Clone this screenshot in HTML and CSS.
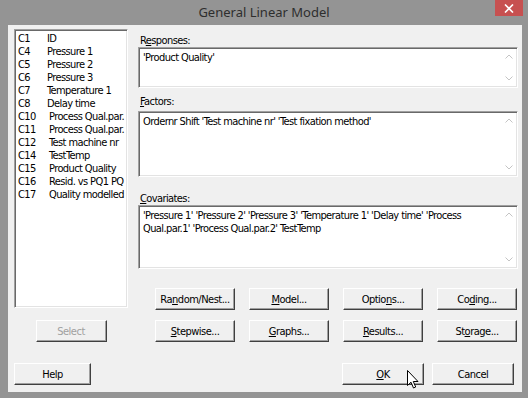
FILE: index.html
```html
<!DOCTYPE html>
<html lang="en">
<head>
    <meta charset="UTF-8">
    <title>General Linear Model</title>
    <link rel="stylesheet" href="styles.css">
</head>
<body>
<div class="window">
    <div class="titlebar">
        <span></span>
        <span class="title">General Linear Model</span>
        <span class="close">
            <svg width="10" height="9" viewBox="0 0 10 9"><path d="M1 0.5 L9 8.5 M9 0.5 L1 8.5" stroke="#fff" stroke-width="1.6"/></svg>
        </span>
    </div>
    <div class="client">
        <div class="main">
            <div class="left">
                <div class="listbox">
                    <div class="row"><span class="code">C1</span>ID</div>
                    <div class="row"><span class="code">C4</span>Pressure 1</div>
                    <div class="row"><span class="code">C5</span>Pressure 2</div>
                    <div class="row"><span class="code">C6</span>Pressure 3</div>
                    <div class="row"><span class="code">C7</span>Temperature 1</div>
                    <div class="row"><span class="code">C8</span>Delay time</div>
                    <div class="row wide"><span class="code">C10</span>Process Qual.par.</div>
                    <div class="row wide"><span class="code">C11</span>Process Qual.par.</div>
                    <div class="row wide"><span class="code">C12</span>Test machine nr</div>
                    <div class="row wide"><span class="code">C14</span>TestTemp</div>
                    <div class="row wide"><span class="code">C15</span>Product Quality</div>
                    <div class="row wide"><span class="code">C16</span>Resid. vs PQ1 PQ</div>
                    <div class="row wide"><span class="code">C17</span>Quality modelled</div>
                </div>
                <button class="btn select" disabled>Select</button>
            </div>
            <div class="right">
                <div class="label first">R<u>e</u>sponses:</div>
                <div class="field responses">
                    <div class="text">'Product Quality'</div>
                    <div class="scroll"><svg width="8" height="5" viewBox="0 0 8 5"><path d="M0.5 4.5 L4 1 L7.5 4.5" fill="none" stroke="#c4c4c4"/></svg><svg width="8" height="5" viewBox="0 0 8 5"><path d="M0.5 0.5 L4 4 L7.5 0.5" fill="none" stroke="#c4c4c4"/></svg></div>
                </div>
                <div class="label factors-label"><u>F</u>actors:</div>
                <div class="field factors">
                    <div class="text">Ordernr Shift 'Test machine nr' 'Test fixation method'</div>
                    <div class="scroll"><svg width="8" height="5" viewBox="0 0 8 5"><path d="M0.5 4.5 L4 1 L7.5 4.5" fill="none" stroke="#c4c4c4"/></svg><svg width="8" height="5" viewBox="0 0 8 5"><path d="M0.5 0.5 L4 4 L7.5 0.5" fill="none" stroke="#c4c4c4"/></svg></div>
                </div>
                <div class="label covariates-label"><u>C</u>ovariates:</div>
                <div class="field covariates">
                    <div class="text">'Pressure 1' 'Pressure 2' 'Pressure 3' 'Temperature 1' 'Delay time' 'Process<br>Qual.par.1' 'Process Qual.par.2' TestTemp</div>
                    <div class="scroll"><svg width="8" height="5" viewBox="0 0 8 5"><path d="M0.5 4.5 L4 1 L7.5 4.5" fill="none" stroke="#c4c4c4"/></svg><svg width="8" height="5" viewBox="0 0 8 5"><path d="M0.5 0.5 L4 4 L7.5 0.5" fill="none" stroke="#c4c4c4"/></svg></div>
                </div>
                <div class="btn-grid">
                    <button class="btn">Ra<u>n</u>dom/Nest...</button>
                    <button class="btn"><u>M</u>odel...</button>
                    <button class="btn">Optio<u>n</u>s...</button>
                    <button class="btn">Co<u>d</u>ing...</button>
                    <button class="btn"><u>S</u>tepwise...</button>
                    <button class="btn"><u>G</u>raphs...</button>
                    <button class="btn"><u>R</u>esults...</button>
                    <button class="btn">St<u>o</u>rage...</button>
                </div>
            </div>
        </div>
        <div class="bottom">
            <button class="btn help">Help</button>
            <div class="spacer"></div>
            <button class="btn ok"><u>O</u>K</button>
            <button class="btn cancel">Cancel</button>
        </div>
    </div>
    <svg class="cursor" width="12" height="19" viewBox="0 0 12 19">
        <path d="M0.5 0.5 L0.5 15.5 L4 12.2 L6.5 18 L8.7 17 L6.3 11.5 L11 11.5 Z" fill="#fff" stroke="#000" stroke-width="1" stroke-linejoin="miter"/>
    </svg>
</div>
</body>
</html>
```

FILE: styles.css
```css
body {
    margin: 0;
    background-color: #949494;
    font-family: "DejaVu Sans Condensed", "Liberation Sans", sans-serif;
    font-size: 11px;
    letter-spacing: -0.6px;
    color: #000;
}
.window {
    position: relative;
    width: 528px;
    height: 398px;
}
.titlebar {
    height: 25px;
    display: grid;
    grid-template-columns: 1fr auto 1fr;
    align-items: start;
}
.title {
    font-family: "Noto Sans", sans-serif;
    font-size: 13px;
    letter-spacing: 0;
    line-height: 24px;
    color: #2e2e2e;
}
.close {
    justify-self: end;
    margin-right: 5px;
    width: 28px;
    height: 16px;
    background-color: #c75050;
    display: flex;
    align-items: center;
    justify-content: center;
}
.client {
    margin-left: 8px;
    width: 514px;
    height: 367px;
    background-color: #f0f0f0;
    box-sizing: border-box;
    padding: 4px 0 0 6px;
}
.main {
    display: flex;
}
.left {
    width: 114px;
    display: flex;
    flex-direction: column;
    align-items: center;
}
.listbox {
    width: 114px;
    height: 279px;
    box-sizing: border-box;
    background: #fff;
    border: 1px solid;
    border-color: #a0a0a0 #fff #fff #a0a0a0;
    box-shadow: inset 1px 1px #696969, inset -1px -1px #e3e3e3;
    padding: 2px 0 0 3px;
    overflow: hidden;
}
.row {
    line-height: 13px;
    white-space: nowrap;
}
.code {
    display: inline-block;
    width: 29px;
}
.wide .code {
    width: 31px;
}
.right {
    margin-left: 10px;
    width: 380px;
}
.label {
    line-height: 13px;
    padding-left: 2px;
}
.label.first {
    margin-top: 5px;
}
.factors-label {
    margin-top: 7px;
    margin-bottom: 3px;
}
.covariates-label {
    margin-top: 15px;
}
.field {
    display: flex;
    box-sizing: border-box;
    background: #fff;
    border: 1px solid;
    border-color: #a0a0a0 #fff #fff #a0a0a0;
    box-shadow: inset 1px 1px #696969, inset -1px -1px #e3e3e3;
}
.field .text {
    flex: 1;
    padding: 3px 4px 0;
    line-height: 13px;
}
.field .scroll {
    width: 17px;
    padding: 6px 0 6px;
    display: flex;
    flex-direction: column;
    justify-content: space-between;
    align-items: center;
}
.responses { height: 41px; }
.factors { height: 66px; }
.covariates { height: 64px; }
.btn {
    font-family: inherit;
    font-size: 11px;
    letter-spacing: -0.5px;
    color: #000;
    height: 22px;
    padding: 0;
    box-sizing: border-box;
    background-color: #f0f0f0;
    border: 1px solid;
    border-color: #fff #404040 #404040 #fff;
    box-shadow: inset -1px -1px #a0a0a0;
}
.btn u {
    text-decoration-thickness: 1px;
}
.btn-grid {
    margin: 19px 0 0 17px;
    display: grid;
    grid-template-columns: repeat(4, 80px);
    column-gap: 14px;
    row-gap: 10px;
}
.select {
    margin-top: 12px;
    width: 71px;
    color: #a0a0a0;
}
.bottom {
    display: flex;
    margin-top: 21px;
}
.help {
    width: 77px;
}
.spacer {
    flex: 1;
}
.ok {
    width: 82px;
}
.cancel {
    width: 82px;
    margin-left: 8px;
    margin-right: 8px;
}
.cursor {
    position: absolute;
    left: 407px;
    top: 370px;
}
```
